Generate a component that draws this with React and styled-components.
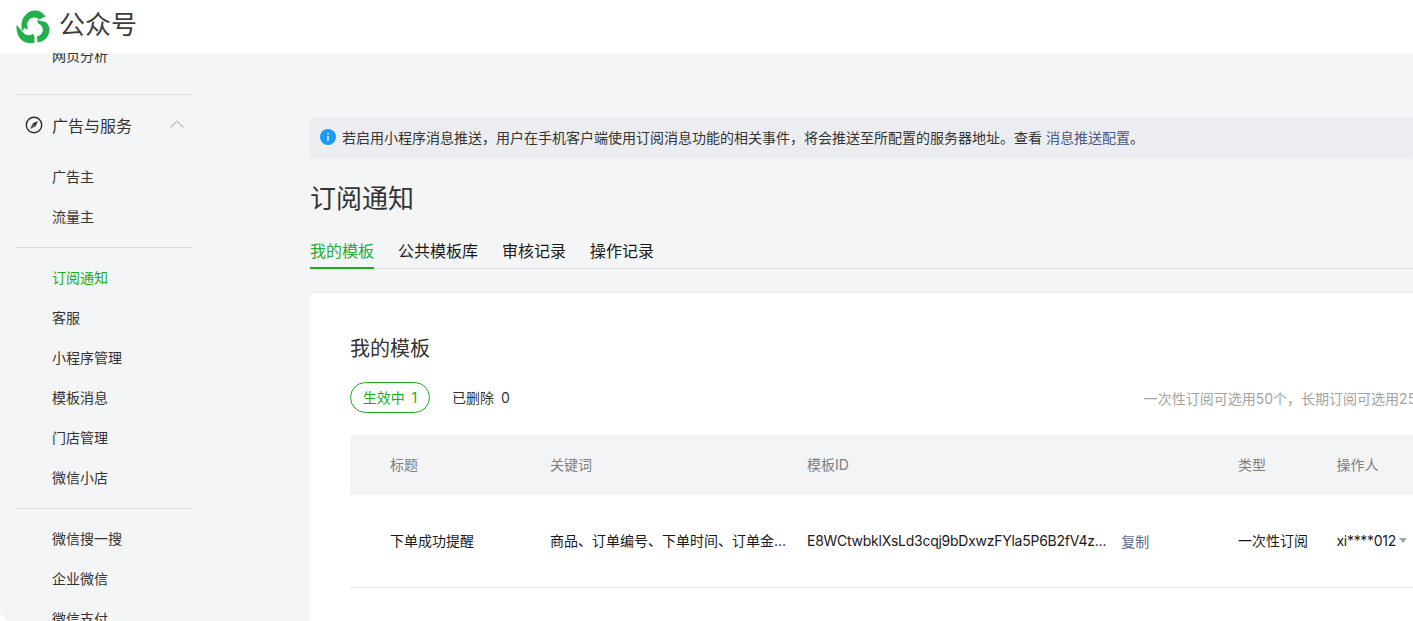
import React from 'react';
import styled, { createGlobalStyle } from 'styled-components';

const GlobalStyle = createGlobalStyle`
  html, body {
    margin: 0;
    height: 100%;
    overflow: hidden;
    background: #fff;
  }
  body {
    font-family: Inter, "Noto Sans CJK SC", sans-serif;
    color: #333;
  }
`;

const Page = styled.div`
  width: 1413px;
  height: 621px;
  display: flex;
  flex-direction: column;
  overflow: hidden;
`;

const Header = styled.header`
  position: relative;
  z-index: 2;
  height: 53px;
  flex: none;
  display: flex;
  align-items: center;
  gap: 9px;
  padding-left: 16px;
  background: #fff;
`;

const Brand = styled.span`
  font-size: 26px;
  line-height: 32px;
  color: #3d3d3d;
  margin-bottom: 4px;
`;

const Body = styled.div`
  flex: 1;
  min-height: 0;
  display: flex;
  background: #f4f5f7;
  border-bottom-left-radius: 12px;
  overflow: hidden;
`;

const Sidebar = styled.aside`
  width: 310px;
  flex: none;
  padding: 0 117px 0 16px;
  box-sizing: border-box;
  overflow: hidden;
`;

const SideList = styled.nav`
  margin-top: -17px;
`;

const SideItem = styled.div`
  height: 40px;
  box-sizing: border-box;
  padding: 0 0 2px 36px;
  display: flex;
  align-items: center;
  font-size: 14px;
  color: ${p => (p.$active ? '#1aad19' : '#333')};
`;

const SideDivider = styled.div`
  height: 1px;
  margin: ${p => p.$top}px 0 ${p => p.$bottom}px;
  background: #dcdde1;
`;

const SideGroup = styled.div`
  height: 40px;
  box-sizing: border-box;
  margin-bottom: 11px;
  padding: 0 9px 2px;
  display: flex;
  align-items: center;
  font-size: 16px;
  color: #333;
`;

const GroupLabel = styled.span`
  flex: 1;
  margin-left: 9px;
`;

const ChevronSvg = styled.svg`
  margin-bottom: 2px;
`;

const Main = styled.main`
  flex: 1;
  min-width: 0;
  overflow: hidden;
  padding-top: 64px;
`;

const Notice = styled.div`
  height: 42px;
  box-sizing: border-box;
  display: flex;
  align-items: center;
  gap: 6px;
  padding: 0 0 2px 10px;
  border-radius: 4px;
  background: #ecedf1;
  font-size: 14px;
  color: #333;
  white-space: nowrap;
`;

const NoticeLink = styled.span`
  color: #44598e;
`;

const PageTitle = styled.h1`
  margin: 22px 0 0;
  font-size: 26px;
  line-height: 36px;
  font-weight: 400;
  color: #333;
`;

const Tabs = styled.div`
  margin-top: 17px;
  height: 34px;
  display: flex;
  gap: 24px;
  border-bottom: 1px solid #dcdde1;
`;

const Tab = styled.div`
  height: 35px;
  box-sizing: border-box;
  border-bottom: ${p => (p.$active ? '2px solid #1aad19' : 'none')};
  font-size: 16px;
  line-height: 35px;
  color: ${p => (p.$active ? '#22ac38' : '#1a1a1a')};
`;

const Card = styled.section`
  margin-top: 24px;
  height: 340px;
  width: 1300px;
  box-sizing: border-box;
  padding: 40px;
  background: #fff;
  border-top-left-radius: 4px;
  box-shadow: 0 0 3px rgba(0, 0, 0, 0.08);
`;

const CardTitle = styled.h2`
  margin: 1px 0 0;
  font-size: 20px;
  line-height: 30px;
  font-weight: 400;
  color: #333;
`;

const Toolbar = styled.div`
  margin-top: 18px;
  height: 31px;
  display: flex;
  align-items: center;
  white-space: nowrap;
`;

const Pill = styled.div`
  width: 80px;
  height: 31px;
  box-sizing: border-box;
  border: 1px solid #1aad19;
  border-radius: 16px;
  padding-bottom: 1px;
  display: flex;
  align-items: center;
  justify-content: center;
  font-size: 14px;
  word-spacing: 3px;
  color: #1aad19;
`;

const Plain = styled.div`
  margin-left: 22px;
  padding-bottom: 1px;
  font-size: 14px;
  word-spacing: 3px;
  color: #333;
`;

const Hint = styled.div`
  margin-left: 634px;
  font-size: 14px;
  color: #a3a3a3;
`;

const Row = styled.div`
  margin-top: ${p => (p.$head ? '22px' : '0')};
  height: ${p => (p.$head ? '60px' : '93px')};
  box-sizing: border-box;
  padding-bottom: 2px;
  display: grid;
  grid-template-columns: 200px 257px 431px 98.5px 1fr;
  align-items: center;
  background: ${p => (p.$head ? '#f3f4f6' : '#fff')};
  border-bottom: ${p => (p.$head ? 'none' : '1px solid #e5e5e5')};
  font-size: 14px;
  color: ${p => (p.$head ? '#7f7f7f' : '#1a1a1a')};
  white-space: nowrap;
`;

const TitleCell = styled.div`
  padding-left: 40px;
`;

const IdCell = styled.div`
  display: flex;
  align-items: center;
  gap: 15px;
`;

const IdText = styled.span`
  letter-spacing: -0.26px;
`;

const Copy = styled.span`
  margin-top: 2px;
  color: #576b95;
`;

const Operator = styled.div`
  display: flex;
  align-items: center;
  gap: 3px;
`;

const OperatorName = styled.span`
  letter-spacing: -0.3px;
`;

const Logo = () => (
  <svg width="34" height="34" viewBox="0 0 34 34">
    <g fill="#22b14c">
      <path d="M6.5 21 C3 11.5 9 1.5 18 0.5 C23 0 27 2.5 29.5 6.5 L23.5 9.5 C21 7.2 17.5 6.8 14.5 8.5 C12 10.2 10.8 13 11.2 16 L12 19.5 L8.5 18 Z" />
      <path d="M21 9.8 L25.5 11.2 C30 10.5 33.5 15 33.5 19.5 C33.5 26.5 28 32 21.5 32.5 L21 26.5 C24.5 25.5 27 23 26.8 19.5 C26.6 16.5 24.5 14.5 22.5 13.8 Z" />
      <path d="M0.5 15 L6 21 C7.5 24 11 25.8 14.5 25.2 L17 23.8 L18.5 27 L18.5 32.8 C13.5 33.8 8.5 33 5 29.5 C1.5 26 0 20 0.5 15 Z" />
    </g>
  </svg>
);

const CompassIcon = () => (
  <svg width="18" height="18" viewBox="0 0 18 18">
    <circle cx="9" cy="9" r="7.7" fill="none" stroke="#2b2b2b" strokeWidth="1.4" />
    <path d="M13 5 L10.4 10.4 L7.6 7.6 Z" fill="#2b2b2b" />
    <path d="M5 13 L7.6 7.6 L10.4 10.4 Z" fill="#555" />
  </svg>
);

const Chevron = () => (
  <ChevronSvg width="14" height="8" viewBox="0 0 14 8">
    <path d="M0.5 7.5 L7 1 L13.5 7.5" fill="none" stroke="#b9b9b9" strokeWidth="1.1" />
  </ChevronSvg>
);

const InfoIcon = () => (
  <svg width="16" height="16" viewBox="0 0 16 16">
    <circle cx="8" cy="8" r="8" fill="#1c9cf7" />
    <rect x="7.3" y="7" width="1.4" height="5" fill="#fff" />
    <rect x="7.3" y="4.2" width="1.4" height="1.5" fill="#fff" />
  </svg>
);

const Caret = () => (
  <svg width="8" height="5" viewBox="0 0 8 5">
    <path d="M0 0 H8 L4 5 Z" fill="#a3a3a3" />
  </svg>
);

const App = () => (
  <>
    <GlobalStyle />
    <Page>
      <Header>
        <Logo />
        <Brand>公众号</Brand>
      </Header>
      <Body>
        <Sidebar>
          <SideList>
            <SideItem>网页分析</SideItem>
            <SideDivider $top={18} $bottom={11} />
            <SideGroup>
              <CompassIcon />
              <GroupLabel>广告与服务</GroupLabel>
              <Chevron />
            </SideGroup>
            <SideItem>广告主</SideItem>
            <SideItem>流量主</SideItem>
            <SideDivider $top={10} $bottom={10} />
            <SideItem $active>订阅通知</SideItem>
            <SideItem>客服</SideItem>
            <SideItem>小程序管理</SideItem>
            <SideItem>模板消息</SideItem>
            <SideItem>门店管理</SideItem>
            <SideItem>微信小店</SideItem>
            <SideDivider $top={10} $bottom={10} />
            <SideItem>微信搜一搜</SideItem>
            <SideItem>企业微信</SideItem>
            <SideItem>微信支付</SideItem>
          </SideList>
        </Sidebar>
        <Main>
          <Notice>
            <InfoIcon />
            <span>
              若启用小程序消息推送，用户在手机客户端使用订阅消息功能的相关事件，将会推送至所配置的服务器地址。查看{' '}
              <NoticeLink>消息推送配置</NoticeLink>。
            </span>
          </Notice>
          <PageTitle>订阅通知</PageTitle>
          <Tabs>
            <Tab $active>我的模板</Tab>
            <Tab>公共模板库</Tab>
            <Tab>审核记录</Tab>
            <Tab>操作记录</Tab>
          </Tabs>
          <Card>
            <CardTitle>我的模板</CardTitle>
            <Toolbar>
              <Pill>生效中 1</Pill>
              <Plain>已删除 0</Plain>
              <Hint>一次性订阅可选用50个，长期订阅可选用25个</Hint>
            </Toolbar>
            <Row $head>
              <TitleCell>标题</TitleCell>
              <div>关键词</div>
              <div>模板ID</div>
              <div>类型</div>
              <div>操作人</div>
            </Row>
            <Row>
              <TitleCell>下单成功提醒</TitleCell>
              <div>商品、订单编号、下单时间、订单金...</div>
              <IdCell>
                <IdText>E8WCtwbklXsLd3cqj9bDxwzFYla5P6B2fV4z...</IdText>
                <Copy>复制</Copy>
              </IdCell>
              <div>一次性订阅</div>
              <Operator>
                <OperatorName>xi****012</OperatorName>
                <Caret />
              </Operator>
            </Row>
          </Card>
        </Main>
      </Body>
    </Page>
  </>
);

export default App;
